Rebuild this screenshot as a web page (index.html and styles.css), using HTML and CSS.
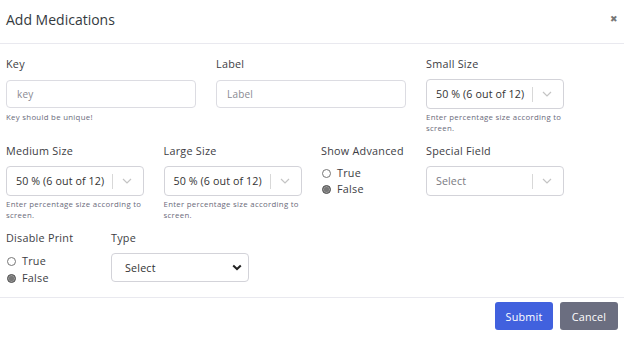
FILE: index.html
```html
<!DOCTYPE html>
<html>
<head>
<meta charset="utf-8">
<link rel="stylesheet" href="styles.css">
</head>
<body>
<div class="modal">
  <div class="modal-header">
    <h2 class="title">Add Medications</h2>
    <span class="close">&#x2716;</span>
  </div>
  <div class="modal-body">
    <div class="grid">
      <div class="field span4">
        <label class="lbl">Key</label>
        <input class="text-input" placeholder="key">
        <div class="help">Key should be unique!</div>
      </div>
      <div class="field span4">
        <label class="lbl">Label</label>
        <input class="text-input" placeholder="Label">
      </div>
      <div class="field span3">
        <label class="lbl">Small Size</label>
        <div class="rselect"><span class="val">50 % (6 out of 12)</span><span class="sep"></span><svg class="chev" width="10" height="6" viewBox="0 0 10 6"><path d="M1 1l4 4 4-4" fill="none" stroke="#c4c4c4" stroke-width="1.2"/></svg></div>
        <div class="help">Enter percentage size according to screen.</div>
      </div>

      <div class="field span3 row2">
        <label class="lbl">Medium Size</label>
        <div class="rselect"><span class="val">50 % (6 out of 12)</span><span class="sep"></span><svg class="chev" width="10" height="6" viewBox="0 0 10 6"><path d="M1 1l4 4 4-4" fill="none" stroke="#c4c4c4" stroke-width="1.2"/></svg></div>
        <div class="help">Enter percentage size according to screen.</div>
      </div>
      <div class="field span3 row2">
        <label class="lbl">Large Size</label>
        <div class="rselect"><span class="val">50 % (6 out of 12)</span><span class="sep"></span><svg class="chev" width="10" height="6" viewBox="0 0 10 6"><path d="M1 1l4 4 4-4" fill="none" stroke="#c4c4c4" stroke-width="1.2"/></svg></div>
        <div class="help">Enter percentage size according to screen.</div>
      </div>
      <div class="field span2 row2">
        <label class="lbl">Show Advanced</label>
        <div class="radios">
          <label class="radio"><span class="dot"></span>True</label>
          <label class="radio"><span class="dot on"></span>False</label>
        </div>
      </div>
      <div class="field span3 row2">
        <label class="lbl">Special Field</label>
        <div class="rselect"><span class="val ph">Select</span><span class="sep"></span><svg class="chev" width="10" height="6" viewBox="0 0 10 6"><path d="M1 1l4 4 4-4" fill="none" stroke="#c4c4c4" stroke-width="1.2"/></svg></div>
      </div>

      <div class="field span2 row3">
        <label class="lbl">Disable Print</label>
        <div class="radios r3">
          <label class="radio"><span class="dot"></span>True</label>
          <label class="radio"><span class="dot on"></span>False</label>
        </div>
      </div>
      <div class="field span3 row3">
        <label class="lbl">Type</label>
        <div class="nselect"><span class="val">Select</span><svg width="10" height="7" viewBox="0 0 10 7"><path d="M1.2 1.5l3.8 3.6 3.8-3.6" fill="none" stroke="#222" stroke-width="2"/></svg></div>
      </div>
    </div>
  </div>
  <div class="modal-footer">
    <button class="btn submit">Submit</button>
    <button class="btn cancel">Cancel</button>
  </div>
</div>
</body>
</html>
```
FILE: styles.css
```css
* { box-sizing: border-box; }
html, body { margin: 0; padding: 0; background: #fff; }
body {
  font-family: "Open Sans", "Noto Sans", sans-serif;
  color: #343a40;
  width: 624px;
  height: 344px;
  overflow: hidden;
}
.modal { width: 624px; }
.modal-header {
  display: flex;
  align-items: center;
  justify-content: space-between;
  height: 44px;
  padding: 0 6px 0 6px;
  border-bottom: 1px solid #e9e9ef;
}
.title {
  margin: 0;
  font-size: 14px;
  font-weight: 500;
  color: #343a40;
  padding-bottom: 4px;
}
.close {
  font-size: 9px;
  color: #777;
  padding-bottom: 6px;
}
.modal-body { padding: 13px 8px 12px 6px; border-bottom: 1px solid #e9e9ef; }
.grid {
  display: grid;
  grid-template-columns: repeat(12, 32.5px);
  column-gap: 20px;
}
.span2 { grid-column: span 2; }
.span3 { grid-column: span 3; }
.span4 { grid-column: span 4; }
.field { display: flex; flex-direction: column; min-width: 0; }
.row2 { margin-top: 10px; height: 87px; }
.lbl {
  font-size: 10.8px;
  font-weight: 500;
  color: #3d3d44;
  line-height: 14px;
  letter-spacing: 0.25px;
  margin-bottom: 9px;
  white-space: nowrap;
}
.text-input {
  width: 100%;
  height: 28px;
  border: 1px solid #dcdce2;
  border-radius: 4px;
  padding: 0 10px;
  font-family: inherit;
  font-size: 10px;
  letter-spacing: 0.2px;
  color: #444;
  outline: none;
}
.text-input::placeholder { color: #8a8a92; }
.help {
  font-size: 7.8px;
  color: #6a6a7a;
  line-height: 11px;
  letter-spacing: 0.3px;
  margin-top: 4px;
}
.rselect {
  width: 138px;
  height: 30px;
  margin-top: -1px;
  border: 1px solid #d3d3d9;
  border-radius: 4px;
  display: flex;
  align-items: center;
  padding-left: 9px;
  font-size: 10.7px;
  letter-spacing: 0.1px;
  color: #333;
}
.rselect .val { flex: 1; white-space: nowrap; }
.rselect .val.ph { color: #7a7a82; }
.sep { width: 1px; height: 15px; background: #d8d8d8; margin: 0 9px 0 6px; }
.chev { margin-right: 11px; }
.rselect + .help { margin-top: 3px; }
.radios { display: flex; flex-direction: column; gap: 2px; margin-top: -1px; }
.radios.r3 { margin-top: 0; gap: 3px; }
.radio {
  display: flex;
  align-items: center;
  font-size: 10.8px;
  font-weight: 500;
  letter-spacing: 0.25px;
  color: #3d3d44;
  line-height: 14px;
}
.dot {
  width: 9px;
  height: 9px;
  border-radius: 50%;
  border: 1px solid #767676;
  margin: 0 6px 0 1px;
  background: #fff;
}
.dot.on { background: #777; border-color: #555; box-shadow: inset 0 0 0 1px #999; }
.nselect {
  width: 138px;
  height: 29px;
  border: 1px solid #d3d3d9;
  border-radius: 4px;
  display: flex;
  align-items: center;
  justify-content: space-between;
  padding: 0 6px 0 13px;
  font-size: 10.7px;
  letter-spacing: 0.2px;
  color: #333;
  margin-top: -1px;
}
.modal-footer {
  display: flex;
  justify-content: flex-end;
  gap: 7px;
  padding: 4px 6px 0 0;
}
.btn {
  height: 28px;
  border: none;
  border-radius: 3px;
  font-family: inherit;
  font-size: 10.8px;
  letter-spacing: 0.2px;
  color: #fff;
  padding: 0;
}
.submit { background: #4161de; width: 58px; }
.cancel { background: #6b6e80; width: 58px; }
```
